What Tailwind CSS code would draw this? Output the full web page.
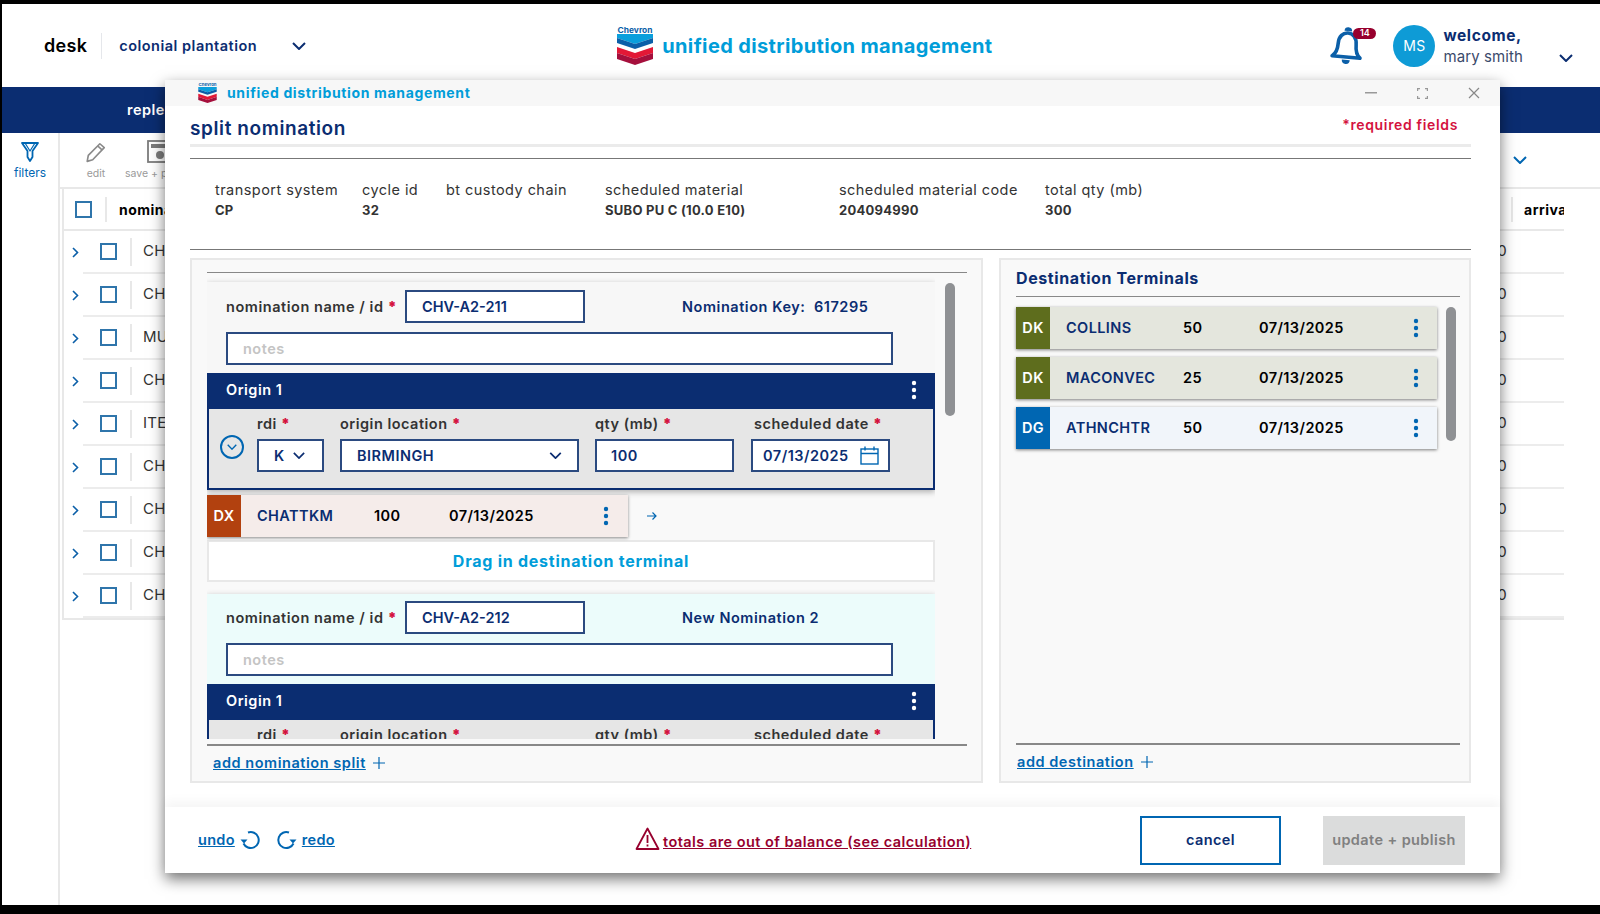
<!DOCTYPE html>
<html lang="en">
<head>
    <meta charset="UTF-8">
    <title>split nomination</title>
    <script src="https://cdn.jsdelivr.net/npm/@tailwindcss/browser@4"></script>
</head>
<body class="bg-black font-['Inter',sans-serif] text-[#0b2d71]">
    <!-- shared icons -->
    <svg class="hidden">
        <symbol id="logo" viewBox="0 0 36 39">
            <text x="18" y="6.5" text-anchor="middle" font-size="8" font-weight="700" fill="#0b5fa8" textLength="35" lengthAdjust="spacingAndGlyphs">Chevron</text>
            <polygon points="0,8 18,8 36,8 36,12 18,18 0,12" fill="#0a9fdc"/>
            <polygon points="0,12 18,18 36,12 36,17 18,23 0,17" fill="#0b5fa8"/>
            <polygon points="0,21 18,27 36,21 36,27 18,33 0,27" fill="#e21836"/>
            <polygon points="0,27 18,33 36,27 36,33 18,39 0,33" fill="#a50f3c"/>
        </symbol>
        <symbol id="chev" viewBox="0 0 14 8">
            <path d="M1 1l6 6 6-6" fill="none" stroke="currentColor" stroke-width="2"/>
        </symbol>
        <symbol id="dots" viewBox="0 0 6 20">
            <circle cx="3" cy="3" r="2.2" fill="currentColor"/>
            <circle cx="3" cy="10" r="2.2" fill="currentColor"/>
            <circle cx="3" cy="17" r="2.2" fill="currentColor"/>
        </symbol>
    </svg>

    <div class="relative h-[914px] w-[1600px] overflow-hidden pt-[4px] pb-[9px] pl-[2px]">
        <div class="flex h-full flex-col bg-white">
            <!-- App header -->
            <header class="flex h-[83px] shrink-0 items-center">
                <span class="ml-[42px] text-[18px] font-semibold tracking-[0.3px] text-black">desk</span>
                <span class="ml-[14px] h-[26px] w-px bg-gray-200"></span>
                <span class="ml-[17px] text-[14.5px] font-semibold tracking-[0.5px]">colonial plantation</span>
                <svg class="ml-[35px] h-[8px] w-[14px]"><use href="#chev"/></svg>
                <div class="ml-[311px] flex items-center gap-[9px]">
                    <svg class="h-[39px] w-[36px]"><use href="#logo"/></svg>
                    <span class="text-[20px] font-bold tracking-[0.36px] whitespace-nowrap text-[#009dd9]">unified distribution management</span>
                </div>
                <div class="relative ml-[338px] h-[38px] w-[46px]">
                    <svg class="absolute left-0 top-0 h-[38px] w-[34px] rotate-[5deg] text-[#0b5fa8]" viewBox="0 0 34 38" fill="none" stroke="currentColor" stroke-width="3.6">
                        <path d="M3 30c4-3 5-7 5-13 0-7 4-11 9-11 5 0 9 4 9 11 0 6 1 10 5 13z" stroke-linejoin="round"/>
                        <path d="M15 4a2 2 0 014 0" />
                        <path d="M13 33a4 4 0 008 0z" fill="currentColor" stroke="none"/>
                    </svg>
                    <span class="absolute left-[23px] top-[1px] flex h-[11px] w-[23px] items-center justify-center rounded-full bg-[#97002e] text-[9px] font-semibold text-white">14</span>
                </div>
                <span class="ml-[17px] flex h-[42px] w-[42px] items-center justify-center rounded-full bg-[#0e9bd6] text-[14px] tracking-[0.5px] text-white">MS</span>
                <div class="ml-[8px] leading-[21px]">
                    <div class="text-[15.5px] font-bold tracking-[0.6px]">welcome,</div>
                    <div class="text-[15px] tracking-[0.1px] text-[#3b4a6b]">mary smith</div>
                </div>
                <svg class="ml-[36px] mt-[24px] h-[8px] w-[14px]"><use href="#chev"/></svg>
            </header>

            <!-- Nav -->
            <nav class="flex h-[46px] shrink-0 items-center bg-[#0b2d71] pl-[125px] text-[14.5px] font-semibold tracking-[0.5px] text-white">replenishment</nav>

            <main class="flex min-h-0 flex-1">
                <aside class="flex w-[58px] shrink-0 flex-col items-center border-r-2 border-[#e8e8e8] pt-[9px] text-[#0066b2]">
                    <svg class="h-[20px] w-[18px]" viewBox="0 0 18 20" fill="none" stroke="currentColor" stroke-width="1.8" stroke-linejoin="round">
                        <path d="M1 1h16L11.5 9v6L9 19 6.5 15V9z"/>
                        <path d="M4 1l5 8 5-8" stroke-width="1.2"/>
                    </svg>
                    <span class="mt-[2px] text-[12px]">filters</span>
                </aside>
                <div class="min-w-0 flex-1">
                    <!-- Toolbar -->
                    <div class="flex h-[56px] items-center border-b-2 border-[#e8e8e8] pl-[20px] pr-[73px] text-[10.5px] text-[#9a9a9a]">
                        <div class="mt-[2px] flex w-[32px] flex-col items-center gap-[3px]">
                            <svg class="h-[22px] w-[22px]" viewBox="0 0 20 20" fill="none" stroke="#8a8a8a" stroke-width="1.5"><path d="M3 13L13.5 2.5l4 3.5L7 17l-5 1.5z" stroke-linejoin="round"/><path d="M11.5 4.5l4 3.5"/></svg>
                            <span>edit</span>
                        </div>
                        <div class="mt-[2px] ml-[13px] flex flex-col items-start gap-[2px]">
                            <svg class="ml-[22px] h-[24px] w-[24px]" viewBox="0 0 24 24" fill="none" stroke="#7c7c7c" stroke-width="1.8"><rect x="1" y="1" width="20" height="21"/><rect x="4" y="4" width="14" height="4" fill="#7c7c7c" stroke="none"/><circle cx="13" cy="15" r="4" fill="#7c7c7c" stroke="none"/></svg>
                            <span>save + publish</span>
                        </div>
                        <svg class="ml-auto h-[8px] w-[14px] text-[#0066b2]"><use href="#chev"/></svg>
                    </div>

                    <!-- Table behind the modal -->
                    <div class="ml-[2px] w-[1502px] border-b-2 border-l-2 border-[#e8e8e8]">
                        <div class="flex h-[42px] items-center border-b-2 border-[#e8e8e8] text-[14px] font-bold tracking-[0.5px] text-black">
                            <span class="ml-[11px] h-[17px] w-[17px] border-2 border-[#2f75ab]"></span>
                            <span class="ml-[13px] h-[25px] w-[2px] bg-[#e8e8e8]"></span>
                            <span class="ml-[12px]">nomination</span>
                            <span class="ml-auto h-[25px] w-[2px] bg-[#e8e8e8]"></span>
                            <span class="ml-[11px] w-[40px] overflow-hidden">arrival</span>
                        </div>
                        <div id="rows"></div>
                    </div>
                </div>
            </main>
        </div>

        <!-- Modal window -->
        <section class="absolute left-[165px] top-[80px] flex h-[793px] w-[1335px] flex-col bg-white shadow-[0_6px_14px_rgba(0,0,0,0.55)]">
            <div class="flex h-[26px] shrink-0 items-center bg-[#f7f7f7] pl-[33px]">
                <svg class="h-[20px] w-[19px]"><use href="#logo"/></svg>
                <span class="ml-[10px] pb-[2px] text-[14px] font-bold tracking-[0.65px] text-[#009dd9]">unified distribution management</span>
                <svg class="ml-auto h-[2px] w-[12px]" viewBox="0 0 12 2"><rect width="12" height="1.5" fill="#999"/></svg>
                <svg class="ml-[40px] h-[11px] w-[11px]" viewBox="0 0 11 11" fill="none" stroke="#999" stroke-width="1.2"><path d="M0.6 3V0.6H3M8 0.6h2.4V3M10.4 8v2.4H8M3 10.4H0.6V8"/></svg>
                <svg class="ml-[40px] mr-[20px] h-[12px] w-[12px]" viewBox="0 0 12 12" stroke="#888" stroke-width="1.2"><path d="M1 1l10 10M11 1L1 11"/></svg>
            </div>

            <div class="flex-1 pl-[25px] pr-[29px]">
                <div class="flex h-[38px] items-center justify-between pr-[13px]">
                    <h1 class="mt-[8px] text-[19px] font-semibold tracking-[0.6px]">split nomination</h1>
                    <span class="-mt-[2px] text-[14px] font-semibold tracking-[0.65px] text-[#d4123e]">*required fields</span>
                </div>
                <div class="h-[3px] bg-[#ebebeb]"></div>
                <div class="mt-[11px] flex h-[92px] items-center border-y border-[#777] pb-[9px] pl-[25px] text-[14.5px] leading-[20px] tracking-[0.45px] text-[#333]">
                    <div class="w-[147px]">transport system<div class="text-[13px] font-bold tracking-[0.25px]">CP</div></div>
                    <div class="w-[84px]">cycle id<div class="text-[13px] font-bold tracking-[0.25px]">32</div></div>
                    <div class="w-[159px]">bt custody chain<div class="text-[13px] font-bold tracking-[0.25px]">&nbsp;</div></div>
                    <div class="w-[234px]">scheduled material<div class="text-[13px] font-bold tracking-[0.25px]">SUBO PU C (10.0 E10)</div></div>
                    <div class="w-[206px]">scheduled material code<div class="text-[13px] font-bold tracking-[0.25px]">204094990</div></div>
                    <div>total qty (mb)<div class="text-[13px] font-bold tracking-[0.25px]">300</div></div>
                </div>

                <div class="mt-[8px] flex gap-[16px]">
                    <!-- Splits -->
                    <div class="flex h-[525px] w-[793px] flex-col border-2 border-[#e8e8e8] bg-[#f9f9f9] pl-[15px] pr-[14px] pt-[12px]">
                        <div class="relative border-t border-[#888]">
                            <div class="h-[466px] w-[728px] overflow-hidden pt-[9px]">
                                <!-- Split 1 -->
                                <div class="shadow-[0_2px_6px_rgba(0,0,0,0.3)]">
                                    <div class="bg-[#f7f7f7] px-[19px] pb-[8px] pt-[8px]">
                                        <div class="flex items-center text-[14.5px] font-semibold">
                                            <span class="w-[179px] tracking-[0.55px] text-[#333]">nomination name / id <b class="text-[#d4123e]">*</b></span>
                                            <span class="flex h-[33px] w-[180px] items-center border-2 border-[#2b4a80] bg-white pl-[15px]">CHV-A2-211</span>
                                            <span class="ml-[97px] tracking-[0.55px]">Nomination Key:&nbsp; 617295</span>
                                        </div>
                                        <div class="mt-[9px] flex h-[33px] w-[667px] items-center border-2 border-[#2b4a80] bg-white pl-[15px] text-[14.5px] font-semibold tracking-[0.5px] text-[#c4c4c4]">notes</div>
                                    </div>
                                    <div class="flex h-[36px] items-center justify-between bg-[#0b2d71] pb-[2px] pl-[19px] pr-[18px] text-[14.5px] font-semibold tracking-[0.5px] text-white">
                                        Origin 1
                                        <svg class="h-[20px] w-[6px]"><use href="#dots"/></svg>
                                    </div>
                                    <div class="flex h-[81px] border-x-2 border-b-2 border-[#0b2d71] bg-[#e6e6e6] pl-[11px] pt-[4px] text-[14.5px] font-semibold tracking-[0.5px]">
                                        <span class="mr-[13px] mt-[22px] flex h-[24px] w-[24px] items-center justify-center rounded-full border-2 border-[#0066b2] text-[#0066b2]">
                                            <svg class="h-[6px] w-[10px]"><use href="#chev"/></svg>
                                        </span>
                                        <div class="w-[67px]">
                                            <div class="h-[26px] text-[#333]">rdi <b class="text-[#d4123e]">*</b></div>
                                            <div class="flex h-[33px] items-center gap-[8px] border-2 border-[#2b4a80] bg-white pl-[15px]">K <svg class="h-[7px] w-[12px]"><use href="#chev"/></svg></div>
                                        </div>
                                        <div class="ml-[16px] w-[239px]">
                                            <div class="h-[26px] text-[#333]">origin location <b class="text-[#d4123e]">*</b></div>
                                            <div class="flex h-[33px] items-center justify-between border-2 border-[#2b4a80] bg-white pl-[15px] pr-[15px]">BIRMINGH <svg class="h-[7px] w-[13px]"><use href="#chev"/></svg></div>
                                        </div>
                                        <div class="ml-[16px] w-[139px]">
                                            <div class="h-[26px] text-[#333]">qty (mb) <b class="text-[#d4123e]">*</b></div>
                                            <div class="flex h-[33px] items-center border-2 border-[#2b4a80] bg-white pl-[14px]">100</div>
                                        </div>
                                        <div class="ml-[17px] w-[139px]">
                                            <div class="h-[26px] whitespace-nowrap pl-[3px] text-[#333]">scheduled date <b class="text-[#d4123e]">*</b></div>
                                            <div class="flex h-[33px] items-center justify-between border-2 border-[#2b4a80] bg-white pl-[10px] pr-[9px]">07/13/2025
                                                <svg class="h-[19px] w-[19px]" viewBox="0 0 19 19" fill="none" stroke="#0066b2" stroke-width="1.4"><rect x="1" y="3" width="17" height="15"/><path d="M1 7.5h17M5 0.5v4M14 0.5v4"/></svg>
                                            </div>
                                        </div>
                                    </div>
                                </div>

                                <!-- Assigned terminal -->
                                <div class="mt-[5px] flex items-center">
                                    <div class="flex h-[42px] w-[421px] items-center bg-[#f5ecea] text-[14.5px] font-semibold tracking-[0.4px] shadow-[0_1px_3px_rgba(0,0,0,0.45)]">
                                        <span class="flex h-full w-[34px] items-center justify-center bg-[#b2410f] text-white">DX</span>
                                        <span class="ml-[16px] w-[117px]">CHATTKM</span>
                                        <span class="w-[75px] text-black">100</span>
                                        <span class="text-black">07/13/2025</span>
                                        <svg class="ml-auto mr-[19px] h-[20px] w-[6px] text-[#0066b2]"><use href="#dots"/></svg>
                                    </div>
                                    <svg class="ml-[19px] h-[10px] w-[10px]" viewBox="0 0 10 10" fill="none" stroke="#0066b2" stroke-width="1.2"><path d="M0 5h9M5.5 1.5L9 5l-3.5 3.5"/></svg>
                                </div>
                                <div class="mt-[3px] flex h-[42px] items-center justify-center border-2 border-[#e8e8e8] bg-white text-[16px] font-bold tracking-[0.75px] text-[#009dd9]">Drag in destination terminal</div>

                                <!-- Split 2 -->
                                <div class="mt-[12px] shadow-[0_2px_6px_rgba(0,0,0,0.3)]">
                                    <div class="bg-[#ecfcfb] px-[19px] pb-[8px] pt-[7px]">
                                        <div class="flex items-center text-[14.5px] font-semibold">
                                            <span class="w-[179px] tracking-[0.55px] text-[#333]">nomination name / id <b class="text-[#d4123e]">*</b></span>
                                            <span class="flex h-[33px] w-[180px] items-center border-2 border-[#2b4a80] bg-white pl-[15px]">CHV-A2-212</span>
                                            <span class="ml-[97px] tracking-[0.55px]">New Nomination 2</span>
                                        </div>
                                        <div class="mt-[9px] flex h-[33px] w-[667px] items-center border-2 border-[#2b4a80] bg-white pl-[15px] text-[14.5px] font-semibold tracking-[0.5px] text-[#c4c4c4]">notes</div>
                                    </div>
                                    <div class="flex h-[36px] items-center justify-between bg-[#0b2d71] pb-[2px] pl-[19px] pr-[18px] text-[14.5px] font-semibold tracking-[0.5px] text-white">
                                        Origin 1
                                        <svg class="h-[20px] w-[6px]"><use href="#dots"/></svg>
                                    </div>
                                    <div class="flex h-[81px] border-x-2 border-b-2 border-[#0b2d71] bg-[#e6e6e6] pl-[48px] pt-[4px] text-[14.5px] font-semibold tracking-[0.5px] text-[#333]">
                                        <div class="w-[67px]">rdi <b class="text-[#d4123e]">*</b></div>
                                        <div class="ml-[16px] w-[239px]">origin location <b class="text-[#d4123e]">*</b></div>
                                        <div class="ml-[16px] w-[139px]">qty (mb) <b class="text-[#d4123e]">*</b></div>
                                        <div class="ml-[17px] w-[139px] whitespace-nowrap pl-[3px]">scheduled date <b class="text-[#d4123e]">*</b></div>
                                    </div>
                                </div>
                            </div>
                            <div class="absolute left-[738px] top-[10px] h-[133px] w-[10px] rounded-full bg-[#8f9194]"></div>
                        </div>
                        <div class="mt-[5px] border-t-2 border-[#888] pl-[6px] pt-[6px]">
                            <span class="flex items-center gap-[7px] text-[14.5px] font-semibold tracking-[0.55px] text-[#0066b2]">
                                <span class="underline">add nomination split</span>
                                <svg class="h-[12px] w-[12px]" viewBox="0 0 12 12" stroke="#0066b2" stroke-width="1.2"><path d="M6 0v12M0 6h12"/></svg>
                            </span>
                        </div>
                    </div>

                    <!-- Destinations -->
                    <div class="flex h-[525px] w-[472px] flex-col border-2 border-[#e8e8e8] bg-[#f9f9f9] pl-[15px] pr-[9px]">
                        <h2 class="flex h-[36px] shrink-0 items-end pb-[6px] text-[16px] font-bold tracking-[0.6px]">Destination Terminals</h2>
                        <div class="relative flex-1 border-t border-[#888] pt-[10px]">
                            <div class="flex w-[421px] flex-col gap-[8px] text-[14.5px] font-semibold tracking-[0.4px]">
                                <div class="flex h-[42px] items-center bg-[#e4e6dd] shadow-[0_1px_3px_rgba(0,0,0,0.5)]">
                                    <span class="flex h-full w-[34px] items-center justify-center bg-[#5e6d1d] text-white">DK</span>
                                    <span class="ml-[16px] w-[117px]">COLLINS</span>
                                    <span class="w-[76px] text-black">50</span>
                                    <span class="text-black">07/13/2025</span>
                                    <svg class="ml-auto mr-[18px] h-[20px] w-[6px] text-[#0066b2]"><use href="#dots"/></svg>
                                </div>
                                <div class="flex h-[42px] items-center bg-[#e4e6dd] shadow-[0_1px_3px_rgba(0,0,0,0.5)]">
                                    <span class="flex h-full w-[34px] items-center justify-center bg-[#5e6d1d] text-white">DK</span>
                                    <span class="ml-[16px] w-[117px]">MACONVEC</span>
                                    <span class="w-[76px] text-black">25</span>
                                    <span class="text-black">07/13/2025</span>
                                    <svg class="ml-auto mr-[18px] h-[20px] w-[6px] text-[#0066b2]"><use href="#dots"/></svg>
                                </div>
                                <div class="flex h-[42px] items-center bg-[#f1f5fa] shadow-[0_1px_3px_rgba(0,0,0,0.5)]">
                                    <span class="flex h-full w-[34px] items-center justify-center bg-[#0066b2] text-white">DG</span>
                                    <span class="ml-[16px] w-[117px]">ATHNCHTR</span>
                                    <span class="w-[76px] text-black">50</span>
                                    <span class="text-black">07/13/2025</span>
                                    <svg class="ml-auto mr-[18px] h-[20px] w-[6px] text-[#0066b2]"><use href="#dots"/></svg>
                                </div>
                            </div>
                            <div class="absolute left-[430px] top-[10px] h-[134px] w-[10px] rounded-full bg-[#8f9194]"></div>
                        </div>
                        <div class="h-[38px] shrink-0 border-t-2 border-[#888] pl-[1px] pt-[6px]">
                            <span class="flex items-center gap-[7px] text-[14.5px] font-semibold tracking-[0.55px] text-[#0066b2]">
                                <span class="underline">add destination</span>
                                <svg class="h-[12px] w-[12px]" viewBox="0 0 12 12" stroke="#0066b2" stroke-width="1.2"><path d="M6 0v12M0 6h12"/></svg>
                            </span>
                        </div>
                    </div>
                </div>
            </div>

            <!-- Footer -->
            <footer class="flex h-[66px] shrink-0 items-center pl-[33px] pr-[35px] shadow-[0_-6px_10px_rgba(0,0,0,0.04)]">
                <div class="flex w-[437px] items-center text-[14.5px] font-semibold tracking-[0.3px] text-[#0066b2]">
                    <span class="underline">undo</span>
                    <svg class="ml-[5px] h-[22px] w-[22px]" viewBox="0 0 22 22" fill="none" stroke="#0066b2" stroke-width="2"><path d="M8 3.5a8 8 0 11-4.5 11"/><path d="M0.5 10.5l3.5 4 3.5-4z" fill="#0066b2" stroke="none"/></svg>
                    <svg class="ml-[13px] h-[22px] w-[22px]" viewBox="0 0 22 22" fill="none" stroke="#0066b2" stroke-width="2"><path d="M14 3.5a8 8 0 104.5 11"/><path d="M21.5 10.5l-3.5 4-3.5-4z" fill="#0066b2" stroke="none"/></svg>
                    <span class="ml-[5px] underline">redo</span>
                </div>
                <div class="flex items-center gap-[3px] text-[14.5px] font-semibold tracking-[0.45px] text-[#97002e]">
                    <svg class="-mt-[4px] h-[23px] w-[25px]" viewBox="0 0 25 23" fill="none" stroke="#97002e" stroke-width="1.8"><path d="M12.5 1.5L1.5 22h22z" stroke-linejoin="round"/><path d="M12.5 8v8M12.5 17.5v2"/></svg>
                    <span class="mt-[3px] underline">totals are out of balance (see calculation)</span>
                </div>
                <button class="ml-auto h-[49px] w-[141px] border-2 border-[#0066b2] text-[14.5px] font-semibold tracking-[0.4px]">cancel</button>
                <button class="ml-[42px] h-[49px] w-[142px] bg-[#dbdcdc] text-[14.5px] font-semibold tracking-[0.4px] text-[#808080]">update + publish</button>
            </footer>
        </section>
    </div>

    <script>
        const names = ['CHV-A2-201', 'CHV-A2-202', 'MUR-33', 'CHV-A2-204', 'ITE-118', 'CHV-A2-206', 'CHV-A2-207', 'CHV-A2-208', 'CHV-A2-209'];
        document.getElementById('rows').innerHTML = names.map(name => `
            <div class="flex h-[43px] items-center">
                <svg class="ml-[4px] h-[11px] w-[15px] shrink-0 text-[#0b5fa8]" viewBox="0 0 7 11" fill="none" stroke="currentColor" stroke-width="1.6"><path d="M1 1l4.5 4.5L1 10"/></svg>
                <div class="flex h-full flex-1 items-center border-b-2 border-[#ececec] text-[15px] tracking-[0.3px] text-[#333]">
                    <span class="ml-[17px] h-[17px] w-[17px] border-2 border-[#2f75ab]"></span>
                    <span class="ml-[13px] h-[28px] w-[2px] bg-[#e8e8e8]"></span>
                    <span class="ml-[11px]">${name}</span>
                    <span class="ml-auto mr-[57px]">0</span>
                </div>
            </div>`).join('');
    </script>
</body>
</html>
